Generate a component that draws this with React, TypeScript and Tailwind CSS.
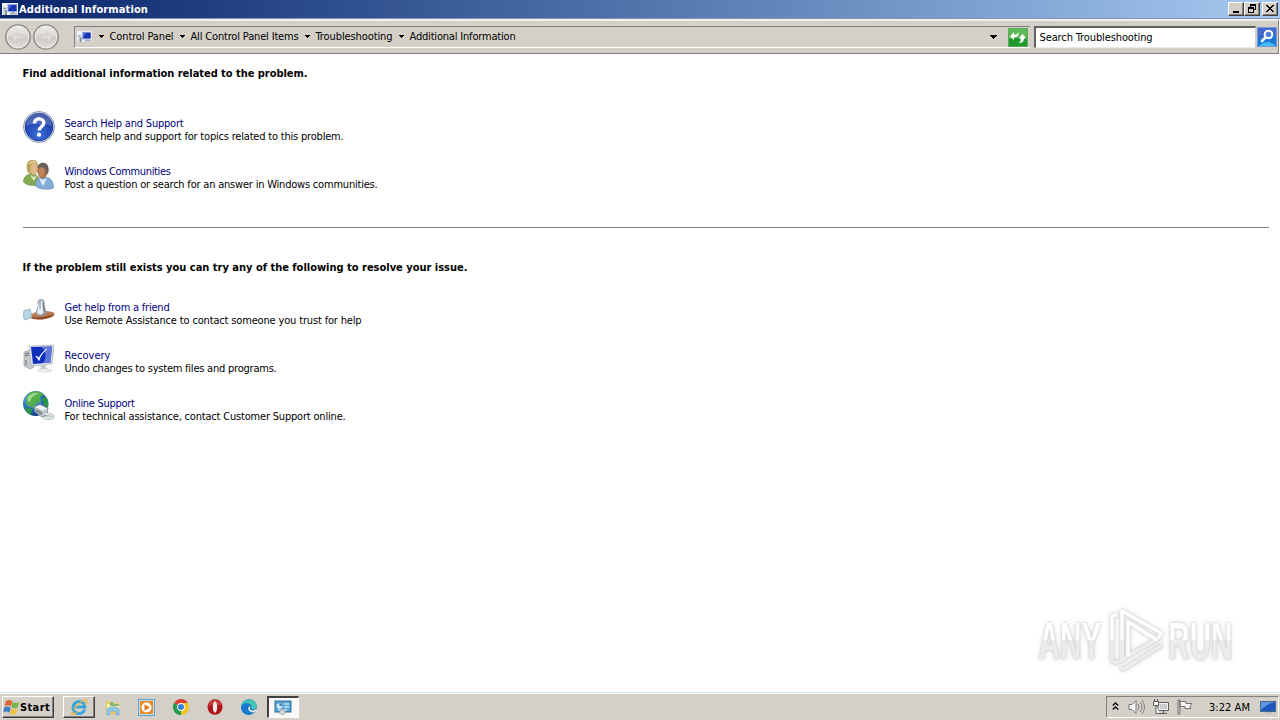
import React from "react";

function PanelIcon({ className }: { className?: string }) {
  return (
    <svg viewBox="0 0 16 14" className={className}>
      <rect x="0" y="1" width="16" height="12" fill="#eef1f8" />
      <path d="M1 5h4v8H1z" fill="#cfd3da" />
      <path d="M1.500 6h2v1h-2zM3 8h2v5H3z" fill="#8792a0" />
      <rect x="5.500" y="2" width="9.500" height="8" fill="#9aa9dc" />
      <rect x="6.500" y="3" width="8" height="6" fill="#1733b4" />
      <path d="M6.500 3h3.500l-3.500 5z" fill="#4d6be0" />
      <path d="M9 10h4v1h2v1.500H8V11h1z" fill="#a7adb9" />
    </svg>
  );
}

function NavButton({ flip }: { flip?: boolean }) {
  return (
    <svg viewBox="0 0 26 26" className="h-[26px] w-[26px]">
      <defs>
        <linearGradient id="nav" x1="0" y1="0" x2="0" y2="1">
          <stop offset="0" stopColor="#f0efed" />
          <stop offset=".48" stopColor="#d9d7d3" />
          <stop offset=".52" stopColor="#cdcac5" />
          <stop offset="1" stopColor="#e2e0dc" />
        </linearGradient>
      </defs>
      <circle cx="13" cy="13" r="12.200" fill="url(#nav)" stroke="#888683" strokeWidth="1.300" />
      <circle cx="13" cy="13" r="10.800" fill="none" stroke="#eeedeb" strokeWidth=".8" />
      <path
        d="M12 7.500 6.500 13l5.500 5.500v-3.500h7v-4h-7z"
        fill="#dedcd8"
        stroke="#cac7c2"
        strokeWidth=".8"
        transform={flip ? "translate(26 0) scale(-1 1)" : undefined}
      />
    </svg>
  );
}

function Arrow({ className }: { className?: string }) {
  return (
    <svg viewBox="0 0 5 3" className={className} shapeRendering="crispEdges">
      <path d="M0 0h5v1H4v1H3v1H2V2H1V1H0z" fill="#000" />
    </svg>
  );
}

function HelpIcon() {
  return (
    <svg viewBox="0 0 32 32" className="h-8 w-8">
      <defs>
        <radialGradient id="help" cx=".5" cy=".8" r=".8">
          <stop offset="0" stopColor="#3d70dc" />
          <stop offset=".6" stopColor="#2149b4" />
          <stop offset="1" stopColor="#17348e" />
        </radialGradient>
      </defs>
      <circle cx="16" cy="16" r="15.500" fill="#dfe5f2" stroke="#7483a5" strokeWidth=".8" />
      <circle cx="16" cy="16" r="13.800" fill="url(#help)" stroke="#1b3990" />
      <path d="M3 15a13 13 0 0 1 26 0c-7-3-18-3-26 0z" fill="#fff" opacity=".2" />
      <path d="M11.300 12.500c0-6.500 10-6 9.500-.3-.3 3.300-4.800 3.800-4.800 7.300" fill="none" stroke="#fff" strokeWidth="3.300" />
      <circle cx="16" cy="23.700" r="2.100" fill="#fff" />
    </svg>
  );
}

function PeopleIcon() {
  return (
    <svg viewBox="0 0 32 32" className="h-8 w-8">
      <path d="M.5 23c0-6 4-8 9-8s7 3 7 11c-5 1-12 1-16-3z" fill="#84ab56" stroke="#618c3e" strokeWidth=".6" />
      <path d="M4.500 13C2 4 5 1 9.500 1s6.500 3 5.500 11l-3 4H8z" fill="#b9a45c" />
      <path d="M5 6c1-5 8-5 9-1-3-1-6-1-9 1z" fill="#ddcc8c" />
      <ellipse cx="11" cy="10" rx="3.500" ry="5.500" fill="#dfb98c" />
      <path d="M7 16l4 6 3-6-3 2z" fill="#d9e8bd" />
      <path d="M12.500 27c0-7 3.500-9 9-9 6 0 9 4 9 11-4 2-14 2-18-2z" fill="#83acd9" stroke="#6489b4" strokeWidth=".6" />
      <ellipse cx="19.500" cy="12" rx="5" ry="7.500" fill="#a76e49" />
      <ellipse cx="18.500" cy="13" rx="2.500" ry="5" fill="#bd8560" />
      <path d="M14.500 9c0-6 10-8 11 0 1 5-2 7-2 7s1-7-4-8z" fill="#62605f" />
      <path d="M16 19l4 8 4-8-4 2z" fill="#e2edf8" />
    </svg>
  );
}

function FriendIcon() {
  return (
    <svg viewBox="0 0 32 32" className="h-8 w-8">
      <path d="M7 20c5-3 9-4 16-4l7 1c3 2 1 5-4 6-6 2-13 2-19 0z" fill="#b97a55" />
      <path d="M9 22c6 1 13 0 22-3-4 5-14 7-22 4z" fill="#8b4b2c" />
      <path d="M8 19.500c4-2 7-3 10-2" stroke="#deb08e" strokeWidth="1.300" fill="none" />
      <path d="M1 15.500l6-1.500 2 8-7 3c-2-2-2-6-1-9.500z" fill="#b9d5e3" stroke="#83a4b5" strokeWidth=".7" />
      <path d="M15 10c-2-8 8-8 6.500 0l2 8c-2 3.500-9 3.500-11 0z" fill="#8e9aa9" />
      <circle cx="18.200" cy="7.500" r="3.500" fill="#a4afbc" />
      <path d="M15.500 9l1-3h2.500l1.500 12c-2 2-4 2-6.500 0z" fill="#e8eef3" />
      <path d="M17 6v8M20 8l1.500 8" stroke="#63717f" strokeWidth=".8" />
    </svg>
  );
}

function RecoveryIcon() {
  return (
    <svg viewBox="0 0 32 32" className="h-8 w-8">
      <path d="M1 9l6-2 4 1v16l-4 2-6-3z" fill="#c6c9ca" stroke="#929799" strokeWidth=".6" />
      <path d="M2 11l4-1M2 13l4-1M3 17v5" stroke="#687072" strokeWidth="1" />
      <path d="M6 3l24-1 1 1-2 18-21 2z" fill="#dce1e8" stroke="#9da5af" strokeWidth=".6" />
      <path d="M8 4l21-.500-1.500 16L10 21z" fill="#102ebc" />
      <path d="M19 4l10-.500-1.500 16-7.500.500c4-5 3-11-1-16z" fill="#6077dc" />
      <path d="M13 13l3 4.500c1-5 4-8 8-11.500-3 2-6 5-8 9z" fill="#fff" stroke="#fff" strokeWidth=".8" />
      <path d="M17 22h6v3l6 2c0 3-12 3-15 1 0-1 2-2 4-3z" fill="#c5cbd0" />
      <ellipse cx="21" cy="27.500" rx="6.500" ry="1.500" fill="#eff1f2" />
    </svg>
  );
}

function OnlineIcon() {
  return (
    <svg viewBox="0 0 32 32" className="h-8 w-8">
      <defs>
        <radialGradient id="globe" cx=".35" cy=".3" r=".75">
          <stop offset="0" stopColor="#9ed3f1" />
          <stop offset=".5" stopColor="#2d76bf" />
          <stop offset="1" stopColor="#0d367e" />
        </radialGradient>
      </defs>
      <circle cx="12.500" cy="12.500" r="12.500" fill="url(#globe)" />
      <path d="M9 1c5-2 10 0 12 3l-4 2 1 5-5 1-3 5-6-3-1-5c0-3 3-7 6-8z" fill="#54ad4b" />
      <path d="M19 7l4-1c3 3 3 8 2 11l-4-3zM3 16l6 2-1 6c-4-2-6-5-6-8z" fill="#2d9348" />
      <path d="M5 6c3-4 8-5 11-3-4 0-8 3-9 8-2 0-3-2-2-5z" fill="#b9e9b0" opacity=".7" />
      <path d="M11 16l6-3 8 4-1 7-5 2-7-5z" fill="#bfc7cd" stroke="#6e7c85" strokeWidth=".7" />
      <path d="M12 16l5-1.500 7 3-4 2z" fill="#f4f7f8" />
      <path d="M13 18l6 3v3l-6-3z" fill="#7f8b94" />
      <path d="M22 23c6 0 9 2 7 4-2 1-7-1-9 0" fill="none" stroke="#8b9da0" strokeWidth="3" />
      <path d="M22 23c6 0 9 2 7 4-2 1-7-1-9 0" fill="none" stroke="#e6ecec" strokeWidth="1.800" />
    </svg>
  );
}

type Item = { icon: React.ReactNode; title: string; text: string; titleClass: string; textClass: string };

const search: Item[] = [
  { icon: <HelpIcon />, title: "Search Help and Support", text: "Search help and support for topics related to this problem.", titleClass: "w-[119px]", textClass: "w-[279px]" },
  { icon: <PeopleIcon />, title: "Windows Communities", text: "Post a question or search for an answer in Windows communities.", titleClass: "w-[106px]", textClass: "w-[313px]" },
];

const resolve: Item[] = [
  { icon: <FriendIcon />, title: "Get help from a friend", text: "Use Remote Assistance to contact someone you trust for help", titleClass: "w-[105px]", textClass: "w-[297px]" },
  { icon: <RecoveryIcon />, title: "Recovery", text: "Undo changes to system files and programs.", titleClass: "w-[46px]", textClass: "w-[212px]" },
  { icon: <OnlineIcon />, title: "Online Support", text: "For technical assistance, contact Customer Support online.", titleClass: "w-[70px]", textClass: "w-[281px]" },
];

/* Sets a single line of text so that it fills the width of its box. */
function Line({ children, className }: { children: string; className: string }) {
  const box = React.useRef<HTMLSpanElement>(null);
  const [spacing, setSpacing] = React.useState(0);
  React.useLayoutEffect(() => {
    const el = box.current!;
    const range = document.createRange();
    range.selectNodeContents(el);
    const gap = el.clientWidth - range.getBoundingClientRect().width;
    setSpacing(gap / children.length);
  }, [children]);
  return (
    <span ref={box} className={"block shrink-0 whitespace-nowrap " + className} style={{ letterSpacing: spacing }}>
      {children}
    </span>
  );
}

function Entry({ item }: { item: Item }) {
  return (
    <div className="flex h-12 gap-[9px]">
      {item.icon}
      <div className="pt-[6px] pl-[0.5px] leading-[13px]">
        <a className="block text-[#000080]"><Line className={item.titleClass}>{item.title}</Line></a>
        <Line className={item.textClass}>{item.text}</Line>
      </div>
    </div>
  );
}

function Caption({ children, className = "" }: { children: React.ReactNode; className?: string }) {
  return (
    <button className={"flex h-[14px] w-4 items-center justify-center border border-t-white border-l-white border-r-[#404040] border-b-[#404040] bg-[#d4d0c8] shadow-[inset_-1px_-1px_0_#808080] " + className}>
      {children}
    </button>
  );
}

const raised = "border border-t-white border-l-white border-r-[#404040] border-b-[#404040] shadow-[inset_-1px_-1px_0_#808080]";

export default function App() {
  return (
    <div className="flex h-[720px] w-[1280px] flex-col overflow-hidden bg-white font-['DejaVu_Sans_Condensed','DejaVu_Sans',sans-serif] text-[11px] leading-[13px] text-black">
      <header className="flex h-[18px] shrink-0 items-center bg-linear-to-r from-[#0a246a] to-[#a6caf0] pl-[2px]">
        <PanelIcon className="h-[14px] w-4" />
        <Line className="ml-[1px] w-[129px] font-bold text-white">Additional Information</Line>
        <div className="ml-auto flex pr-[2px]">
          <Caption>
            <svg viewBox="0 0 12 10" className="h-[10px] w-3" shapeRendering="crispEdges"><path d="M3 7h6v2H3z" /></svg>
          </Caption>
          <Caption>
            <svg viewBox="0 0 12 10" className="h-[10px] w-3" shapeRendering="crispEdges"><path d="M4 0h6v6H8V5h1V2H5v1H4zM2 3h6v6H2zm1 2v3h4V5z" fillRule="evenodd" /></svg>
          </Caption>
          <Caption className="ml-[2px]">
            <svg viewBox="0 0 12 10" className="h-[10px] w-3" shapeRendering="crispEdges"><path d="M2 1h2v1h1v1h2V2h1V1h2v1H9v1H8v1H7v1h1v1h1v1h1v1H8V7H7V6H5v1H4v1H2V7h1V6h1V5h1V4H4V3H3V2H2z" /></svg>
          </Caption>
        </div>
      </header>
      <div className="h-px shrink-0 bg-[#8b93b8]" />
      <nav className="mr-px flex h-[35px] shrink-0 items-start border-t-2 border-r border-b border-t-[#f2eeea] border-r-[#808080] border-b-[#808080] bg-[#d4d0c8] pt-[3px]">
        <div className="flex gap-[2px] pl-[4.500px]">
          <NavButton />
          <NavButton flip />
        </div>
        <div className="mt-[2px] ml-[15.500px] flex h-[22px] w-[956px] shrink-0 items-center border-t border-b border-l border-t-[#808080] border-b-white border-l-[#808080]">
          <PanelIcon className="mb-[2px] ml-[1.500px] h-[13px] w-[15px] shrink-0" />
          <div className="mb-[2px] ml-[7.500px] flex items-center">
            <Arrow className="h-[3px] w-[5px] shrink-0" />
            <Line className="ml-[5.500px] w-[64px]">Control Panel</Line>
            <Arrow className="ml-[6.500px] h-[3px] w-[5px] shrink-0" />
            <Line className="ml-[5.500px] w-[108px]">All Control Panel Items</Line>
            <Arrow className="ml-[6.500px] h-[3px] w-[5px] shrink-0" />
            <Line className="ml-[5.500px] w-[77px]">Troubleshooting</Line>
            <Arrow className="ml-[6.500px] h-[3px] w-[5px] shrink-0" />
            <Line className="ml-[5.500px] w-[106px]">Additional Information</Line>
          </div>
          <svg viewBox="0 0 7 4" className="ml-auto h-1 w-[7px]" shapeRendering="crispEdges">
            <path d="M0 0h7v1H6v1H5v1H4v1H3V3H2V2H1V1H0z" />
          </svg>
          <svg viewBox="0 0 20 19" className="mr-[2px] ml-[11px] h-[19px] w-5">
            <rect width="20" height="19" rx="1" fill="#219a2c" />
            <path d="M1 1h18v8c-6 1-12 0-18 2z" fill="#5dbb58" />
            <rect x=".5" y=".5" width="19" height="18" fill="none" stroke="#60a760" />
            <path d="M2 8.500 6 4v2.500c2 0 3.500-.5 4.500-2 .5 3-1.500 5-4.500 5V12z" fill="#fff" />
            <path d="M18.500 10.500 14.500 6l-4 4.500h2.300c0 2-.5 3.300-2 4.500 3.200 0 5.200-1.500 5.200-4.500z" fill="#fff" />
          </svg>
        </div>
        <div className="mt-[2px] ml-1 flex h-[22px] w-[222px] shrink-0 items-center border-t-2 border-l-2 border-r border-b border-t-[#606060] border-l-[#606060] border-r-[#d4d0c8] border-b-[#eeeae5] bg-white pl-[3.500px]">
          <Line className="w-[113px]">Search Troubleshooting</Line>
        </div>
        <svg viewBox="0 0 20 20" className="mt-[3px] ml-[1px] h-5 w-5 shrink-0">
          <rect width="20" height="20" rx="1" fill="#1978d8" />
          <path d="M0 0h20v9C13 8 7 11 0 11z" fill="#4468cc" />
          <path d="M2 19c5-5 11-5 16-1v2H2z" fill="#44bdf4" />
          <rect x=".5" y=".5" width="19" height="19" fill="none" stroke="#7399d9" />
          <circle cx="11.500" cy="7.500" r="3.800" fill="#4b7fe2" stroke="#fff" strokeWidth="2" />
          <path d="M8.500 10.500l-3.500 3.500" stroke="#fff" strokeWidth="2.500" strokeLinecap="round" />
        </svg>
      </nav>

      <main className="flex grow flex-col pt-[13px] pr-[11px] pl-[23px]">
        <h1 className="-ml-[0.5px] font-bold"><Line className="w-[285px]">Find additional information related to the problem.</Line></h1>
        <div className="mt-[31px]">{search.map((i) => <Entry key={i.title} item={i} />)}</div>
        <div className="mt-5 h-px bg-[#808080]" />
        <h2 className="mt-[33px] -ml-[0.5px] font-bold"><Line className="w-[445px]">If the problem still exists you can try any of the following to resolve your issue.</Line></h2>
        <div className="mt-[21px]">{resolve.map((i) => <Entry key={i.title} item={i} />)}</div>
        <div className="mt-auto mr-[37px] mb-[20px] flex h-[64px] items-center gap-1 self-end font-['Liberation_Sans_Narrow','Liberation_Sans',sans-serif] leading-none font-bold text-white [filter:drop-shadow(0_0_1px_#c8c8c8)_drop-shadow(0_0_2px_#dddddd)]">
          <div className="flex h-[52px] w-[68px] items-center justify-center pt-[2px]">
            <span className="inline-block origin-center scale-x-[0.57] bg-linear-to-b from-white from-48% to-[#ececec] to-48% bg-clip-text text-[52px] text-transparent">ANY</span>
          </div>
          <svg viewBox="0 0 56 64" className="h-16 w-14" fill="none" strokeLinejoin="round">
            <path d="M4 30v23l4 2 45-26M12 60l4 1 38-24M19 48l31-17" stroke="#ececec" strokeWidth="3.500" />
            <path d="M9 6.500 4 8v24M14 54V3l39 22-3 5M20 48V14l29 18" stroke="#fff" strokeWidth="3.500" />
            <path d="M14 32v22" stroke="#ececec" strokeWidth="3.500" />
          </svg>
          <div className="flex h-[52px] w-[64px] items-center justify-center pt-[2px]">
            <span className="inline-block origin-center scale-x-[0.57] bg-linear-to-b from-white from-48% to-[#ececec] to-48% bg-clip-text text-[52px] text-transparent">RUN</span>
          </div>
        </div>
      </main>

      <footer className="flex h-7 shrink-0 items-start border-t border-t-[#d4e3e6] bg-[#d4d0c8] shadow-[inset_0_1px_0_white]">
        <button className={"mt-[3px] ml-[2px] flex h-[22px] w-[52px] items-center font-bold " + raised}>
          <svg viewBox="0 0 16 16" className="h-[17px] w-[17px] shrink-0">
            <path d="M2.800 2c2-1.500 4-1.500 6 .2L7.500 7c-2-1.500-4-1.500-6 0z" fill="#e06531" />
            <path d="M9.300 2.700c2 1.500 4 1.500 6 0L14 7.500c-2 1.500-4 1.500-6 0z" fill="#79b34a" />
            <path d="M1.200 8.200c2-1.500 4-1.500 6 .2L6 13c-2-1.500-4-1.500-6-.1z" fill="#3c7eca" />
            <path d="M7.800 8.800c2 1.500 4 1.500 6 0l-1.500 4.900c-2 1.500-4 1.500-5.800-.2z" fill="#f3c23e" />
          </svg>
          <Line className="w-[30px]">Start</Line>
        </button>
        <div className={"mt-[3px] ml-[9px] flex h-[22px] w-8 items-center justify-center " + raised}>
          <svg viewBox="0 0 18 18" className="h-[18px] w-[18px]">
            <path d="M14.700 11.500A6 6 0 1 1 15 9H5" fill="none" stroke="#37a5dc" strokeWidth="2.800" />
            <path d="M3 14c-3 3-1 4 4 0M4 12C8 4 18-1 17 3c0 2-1 3-2 4" fill="none" stroke="#e8b83d" strokeWidth="1.300" />
          </svg>
        </div>
        <div className="mt-[6px] ml-[10px] flex gap-[18px]">
          <svg viewBox="0 0 16 17" className="h-[17px] w-4">
            <path d="M1 2h5l1 2h7v11H1z" fill="#e8c86a" />
            <path d="M2 5h12v6H2z" fill="#fff0ad" />
            <path d="M5 3h3l1 2h5v2H5z" fill="#89b974" />
            <path d="M2 10c3-3 9-3 12 0v6h-3v-4H5v4H2z" fill="#8fc9e8" stroke="#65a6cb" strokeWidth=".6" />
          </svg>
          <svg viewBox="0 0 17 17" className="-ml-px h-[17px] w-[17px]">
            <rect x=".5" y=".5" width="16" height="16" fill="#c0dff4" stroke="#5ca5d6" />
            <rect x="2" y="2" width="13" height="13" fill="#f08a1e" />
            <circle cx="8.500" cy="8.500" r="5" fill="#fff" />
            <path d="M6.500 5.300l5.500 3.200-5.500 3.200z" fill="#e97718" />
          </svg>
          <svg viewBox="0 0 16 16" className="h-4 w-4">
            <path d="M8 8L1.100 4A8 8 0 0 1 15 4z" fill="#df3c31" />
            <path d="M8 8l7-4a8 8 0 0 1-7 12z" fill="#f4c329" />
            <path d="M8 8v8A8 8 0 0 1 1.100 4z" fill="#279b4b" />
            <path d="M8 4h7l-3.500 6z" fill="#f4c329" />
            <path d="M1.100 4l3.500 6L8 12v4A8 8 0 0 1 1.100 4z" fill="#279b4b" />
            <circle cx="8" cy="8" r="3.900" fill="#fff" /><circle cx="8" cy="8" r="3" fill="#357fdc" />
          </svg>
          <svg viewBox="0 0 16 16" className="h-4 w-4">
            <ellipse cx="8" cy="8" rx="7.500" ry="7.800" fill="#ad151a" />
            <path d="M2 4c3-4 9-4 12 0v3C9 5 6 5 1 8z" fill="#d94b43" opacity=".7" />
            <ellipse cx="8" cy="8" rx="2.200" ry="5.800" fill="#f2e8e4" />
          </svg>
          <svg viewBox="0 0 16 16" className="h-4 w-4">
            <circle cx="8" cy="8" r="7.800" fill="#1768bc" />
            <path d="M.6 6C2-1 14-2 15.800 7c0 4-5 4-6 2 2-2-1-5-5-4-3 0-4 2-4.200 4z" fill="#3ec5b3" />
            <path d="M.2 8c1-5 8-5 9-2-4 0-4 6 0 7 2 1 4 1 5-1C11 18 0 17 .2 8z" fill="#197bd0" />
            <path d="M10 7c-3 3 0 6 5 3l1 1-2 2c-3 1-6 0-7-3 0-2 1-3 3-3z" fill="#d4e0e0" />
          </svg>
        </div>
        <div className="mt-[3px] ml-[10px] flex h-[22px] w-8 items-center justify-center border-t-2 border-l-2 border-r border-b border-t-[#404040] border-l-[#404040] border-r-white border-b-white bg-[#fbfaf8] pr-px">
          <svg viewBox="0 0 18 17" className="h-[17px] w-[18px]">
            <rect x="1" y="2" width="16" height="11" fill="#58a5d3" stroke="#286e9d" />
            <circle cx="5.500" cy="7" r="2.800" fill="#d5edfa" /><path d="M5.500 7V4A3 3 0 0 1 8 7z" fill="#2671a6" />
            <path d="M10 5h5M10 8h5M4 11h9" stroke="#fff" />
            <path d="M7 10l3 1 2 3-4 2-3-2z" fill="#d8d6cf" stroke="#778892" strokeWidth=".5" />
          </svg>
        </div>
        <div className="mt-[3px] mr-px ml-auto flex h-[22px] w-[173px] items-center border border-t-[#808080] border-l-[#808080] border-r-white border-b-white">
          <svg viewBox="0 0 7 8" className="mb-[2px] ml-[5px] h-2 w-[7px]" fill="none" stroke="#000" strokeWidth="1.300"><path d="M.8 3.500l2.700-2.500 2.700 2.500M.8 7.500l2.700-2.500 2.700 2.500" /></svg>
          <svg viewBox="0 0 17 16" className="ml-[9px] h-4 w-[17px]" fill="none" stroke="#777">
            <path d="M1 5.500h3l4-4v13l-4-4H1z" fill="#f8f8f8" />
            <path d="M10 5q2 3 0 6M12 3q4 5 0 10M14 1q5 7 0 14" strokeWidth=".9" />
          </svg>
          <svg viewBox="0 0 16 16" className="ml-[8px] h-4 w-4" fill="#f4f4f4" stroke="#5c5c5c">
            <path d="M5 3.500h10.500v8H5zM7 14.500h7M10.500 11.500v3" />
            <rect x="6.500" y="5" width="7.500" height="5" fill="#c9cccd" stroke="none" />
            <path d="M.5 2.500h5v4h-5zM1.500 0v2M4.500 0v2M3 6.500v8h4" />
          </svg>
          <svg viewBox="0 0 16 16" className="ml-[8px] h-4 w-4" fill="#f4f4f4" stroke="#666" strokeWidth=".9"><path d="M1 1v14M3 1v14M1 1h2M1 15h2M3 2.500h6v2h6l-2 3 1 2H8v-2H3z" /></svg>
          <Line className="ml-[16px] w-[41px]">3:22 AM</Line>
          <svg viewBox="0 0 16 15" className="ml-[10px] h-[15px] w-4">
            <rect x=".5" y="1.500" width="15" height="10" fill="#1c58bb" stroke="#46678e" />
            <path d="M1 2h14C10 3 5 6 1 10z" fill="#5a96e1" /><path d="M5 13h7" stroke="#a3acb6" />
          </svg>
        </div>
      </footer>
    </div>
  );
}
